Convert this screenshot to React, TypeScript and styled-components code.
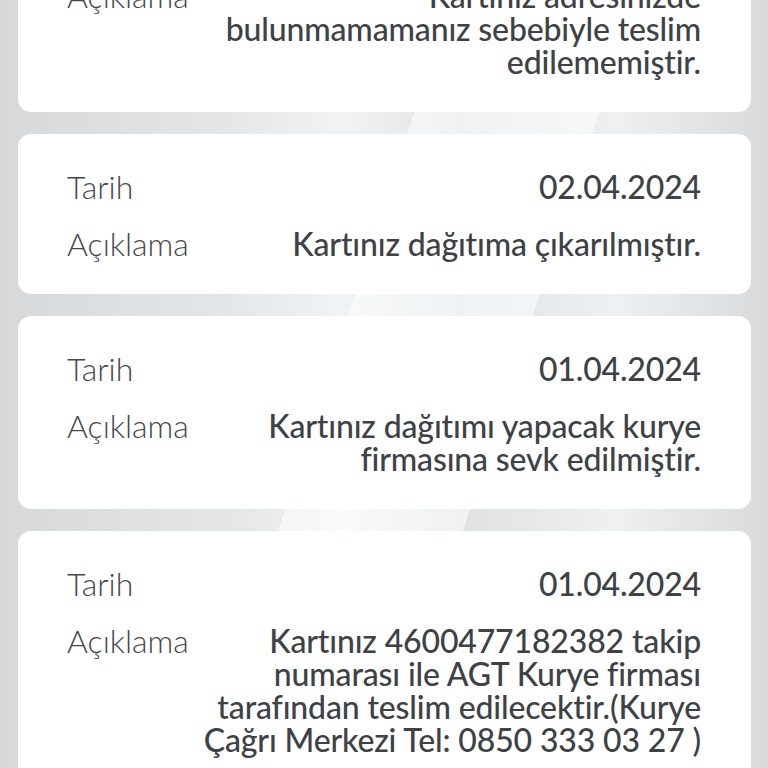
import styled, { createGlobalStyle } from 'styled-components';

const GlobalStyle = createGlobalStyle`
    html, body {
        margin: 0;
        padding: 0;
        height: 100%;
        overflow: hidden;
    }
    body {
        font-family: 'Lato', 'Noto Sans', sans-serif;
        background-color: #dcdee0;
    }
`

const StyledPage = styled.div`
    min-height: 768px;
    padding: 0 17px 0 18px;
    background-color: #dcdee0;
    background-image:
        linear-gradient(108deg, transparent 0 44%, rgba(255, 255, 255, 0.55) 44% 62%, transparent 62% 100%),
        linear-gradient(90deg, #d6d8da 0%, #e4e6e8 30%, #f2f3f4 45%, #dfe1e3 60%, #eef0f1 80%, #d8dadc 100%);
    overflow: hidden;
`

const StyledList = styled.div`
    display: flex;
    flex-direction: column;
    gap: 22px;
    margin-top: -114px;
`

const StyledCard = styled.section`
    background-color: #ffffff;
    border-radius: 13px;
    padding: 36px 50px 34px 49px;
    display: flex;
    flex-direction: column;
    gap: 24px;
`

const StyledRow = styled.div`
    display: grid;
    grid-template-columns: auto 1fr;
    align-items: start;
`

const StyledLabel = styled.span`
    font-size: 32px;
    line-height: 33px;
    font-weight: 300;
    color: #43484c;
`

const StyledValue = styled.span`
    font-size: 32px;
    line-height: 33px;
    font-weight: 500;
    letter-spacing: -0.15px;
    color: #3d4246;
    text-align: right;
`

const Movements = [
    {
        date: '03.04.2024',
        text: 'Kartınız adresinizde bulunmamamanız sebebiyle teslim edilememiştir.',
    },
    {
        date: '02.04.2024',
        text: 'Kartınız dağıtıma çıkarılmıştır.',
    },
    {
        date: '01.04.2024',
        text: 'Kartınız dağıtımı yapacak kurye firmasına sevk edilmiştir.',
    },
    {
        date: '01.04.2024',
        text: 'Kartınız 4600477182382 takip numarası ile AGT Kurye firması tarafından teslim edilecektir.(Kurye Çağrı Merkezi Tel: 0850 333 03 27 )',
    },
]

export default function App(): JSX.Element {
    return (
        <>
            <GlobalStyle />
            <StyledPage>
                <StyledList>
                    {Movements.map((item, index) => (
                        <StyledCard key={index}>
                            <StyledRow>
                                <StyledLabel>Tarih</StyledLabel>
                                <StyledValue>{item.date}</StyledValue>
                            </StyledRow>
                            <StyledRow>
                                <StyledLabel>Açıklama</StyledLabel>
                                <StyledValue>{item.text}</StyledValue>
                            </StyledRow>
                        </StyledCard>
                    ))}
                </StyledList>
            </StyledPage>
        </>
    )
}
